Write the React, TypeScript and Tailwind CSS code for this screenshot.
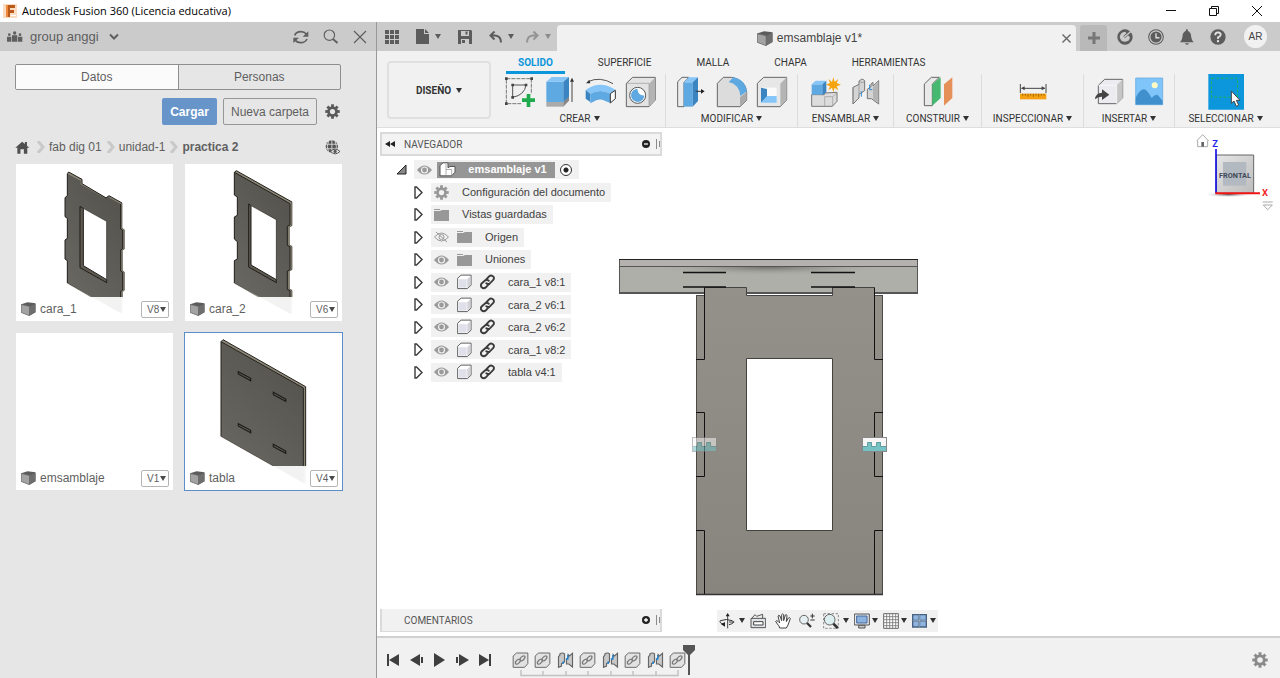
import type { ReactNode } from "react";

type GlyphProps = { box: string; className: string; children: ReactNode };

function Glyph({ box, className, children }: GlyphProps) {
  return (
    <svg viewBox={box} className={`shrink-0 ${className}`} fill="none" aria-hidden="true">
      {children}
    </svg>
  );
}

function Caret({ className = "text-[#333]" }: { className?: string }) {
  return (
    <Glyph box="0 0 6 5" className={`h-[5px] w-[6px] ${className}`}>
      <path d="M0 0h6L3 5z" fill="currentColor" />
    </Glyph>
  );
}

/* ---------- shared drawings ---------- */

function PartCube({ className = "h-[14px] w-[15px]" }: { className?: string }) {
  return (
    <Glyph box="62 440 46 44" className={className}>
      <path d="M62 447 82 441 107 444 107 472 88 483 62 473z" fill="#5c5c5c" />
      <path d="M62 448 88 454V483L62 473z" fill="#a3a3a3" />
      <path d="M88 454 107 446V472L88 483z" fill="#6e6e6e" />
      <path d="M62 448 88 454V483L62 473z" stroke="#6b6b6b" strokeWidth="2" />
    </Glyph>
  );
}

function Gear({ className, color }: { className: string; color: string }) {
  return (
    <Glyph box="0 0 16 16" className={className}>
      <circle cx="8" cy="8" r="4.2" stroke={color} strokeWidth="2.8" />
      {[0, 45, 90, 135, 180, 225, 270, 315].map((a) => (
        <rect key={a} x="6.5" y="0.3" width="3" height="3.4" fill={color} transform={`rotate(${a} 8 8)`} />
      ))}
    </Glyph>
  );
}

/* ---------- window title ---------- */

function TitleBar() {
  return (
    <header className="flex h-[22px] items-center bg-white pl-[3px] pr-[2px]">
      <Glyph box="0 0 14 14" className="h-[14px] w-[14px]">
        <rect width="14" height="14" fill="#fbdcc0" />
        <path d="M4 1h8v3H7v2h4v3H7v4H4z" fill="#b9591a" />
        <path d="M3 1h2v12H3z" fill="#f08a3c" />
        <path d="M8 11h5v1H8z" fill="#fff" />
      </Glyph>
      <h1 className="ml-[5px] flex-1 font-['Open_Sans','Noto_Sans',sans-serif] text-[11px] text-black">
        Autodesk Fusion 360 (Licencia educativa)
      </h1>
      <button aria-label="Minimizar" className="flex w-[43px] justify-center">
        <Glyph box="0 0 10 10" className="h-[10px] w-[10px]"><path d="M0 4.500h10" stroke="#111" /></Glyph>
      </button>
      <button aria-label="Restaurar" className="flex w-[43px] justify-center">
        <Glyph box="0 0 10 10" className="h-[10px] w-[10px]">
          <path d="M.5 2.500h7v7h-7zM2.500 2.500v-2h7v7h-2" stroke="#111" />
        </Glyph>
      </button>
      <button aria-label="Cerrar" className="flex w-[43px] justify-center">
        <Glyph box="0 0 10 10" className="h-[10px] w-[10px]"><path d="M0 0 10 10M10 0 0 10" stroke="#111" /></Glyph>
      </button>
    </header>
  );
}

/* ---------- data panel ---------- */

const wood = (
  <defs>
    <linearGradient id="wood" x1="0" y1="1" x2="0.6" y2="0">
      <stop offset="0" stopColor="#6b6a64" />
      <stop offset="1" stopColor="#56544f" />
    </linearGradient>
  </defs>
);

const caraUno = (
  <Glyph box="48 27 471 471" className="h-full w-full">
    {wood}
    <path fillRule="evenodd" d="M202 56 206 51 246 73V86L318 127 327 122 366 144V220L373 224V282L367 286V346L373 351V406L367 410V475L202 384V317L195 312V255L202 250V190L195 185V128L202 122zM240 154 320 199V383L240 338z" fill="#8b8575" />
    <path fillRule="evenodd" d="M202 56 242 77V88L315 130 325 126 362 147V222L368 226V281L362 285V348L368 352V405L362 409V475L202 384V317L195 312V255L202 250V190L195 185V128L202 122zM240 154 320 199V383L240 338z" fill="url(#wood)" />
    <path d="M202 56 206 51 246 73V86L318 129 327 122 366 144M362 147V222L368 226V281L362 285V348L368 352V405L362 409V430M202 384V317L195 312V255L202 250V190L195 185V128L202 122V56" stroke="#22211e" strokeWidth="3" />
    <path d="M240 154V338L320 383V374L250 332V160z" fill="#5e5a50" stroke="#1c1b18" strokeWidth="3" />
    <path d="M248 159 320 199V383" stroke="#33322e" strokeWidth="2" />
    <path d="M366 144V220L373 224V282L367 286V346L373 351V406L367 410V430M202 384 276 427" stroke="#45423a" strokeWidth="2" />
  </Glyph>
);

const caraDos = (
  <Glyph box="555 27 471 471" className="h-full w-full">
    {wood}
    <path fillRule="evenodd" d="M703 52 709 47 876 141V212L868 216V270L876 274V344L868 348V402L876 406V478L703 384V317L712 312V260L703 252V186L712 181V126L703 120zM746 147 829 194V383L746 336z" fill="#8b8575" />
    <path fillRule="evenodd" d="M703 52 870 146V210L862 214V271L870 275V344L862 348V403L870 407V476L703 384V317L712 312V260L703 252V186L712 181V126L703 120zM746 147 829 194V383L746 336z" fill="url(#wood)" />
    <path d="M703 52 709 47 876 141M703 52 870 146V210L862 214V271L870 275V344L862 348V403L870 407V430M703 384V317L712 312V260L703 252V186L712 181V126L703 120V52" stroke="#22211e" strokeWidth="3" />
    <path d="M746 147V336L829 383V374L753 330V152z" fill="#5e5a50" stroke="#1c1b18" strokeWidth="3" />
    <path d="M753 152 829 194V383" stroke="#33322e" strokeWidth="2" />
    <path d="M876 141V212L868 216V270L876 274V344L868 348V402L876 406V430M703 384 778 427" stroke="#45423a" strokeWidth="2" />
  </Glyph>
);

const tabla = (
  <Glyph box="555 534 471 471" className="h-full w-full">
    {wood}
    <path d="M663 560 669 554 917 695V986L663 844z" fill="#8b8575" />
    <path d="M663 560 910 699V984L663 844z" fill="url(#wood)" />
    <path d="M663 844V560L669 554 917 695V940M663 560 910 699V940" stroke="#24231f" strokeWidth="3" />
    <path d="M663 844 820 933" stroke="#45423a" strokeWidth="2" />
    {[[715, 650], [820, 712], [715, 806], [820, 868]].map(([x, y]) => (
      <path key={`${x}-${y}`} d={`M${x} ${y}l37 20v7l-37 -20z`} stroke="#1c1b18" strokeWidth="3.500" />
    ))}
  </Glyph>
);

const designs: { name: string; version: string; art?: ReactNode; selected?: boolean }[] = [
  { name: "cara_1", version: "V8", art: caraUno },
  { name: "cara_2", version: "V6", art: caraDos },
  { name: "emsamblaje", version: "V1" },
  { name: "tabla", version: "V4", art: tabla, selected: true },
];

function Crumb({ children }: { children: ReactNode }) {
  return (
    <li className="flex items-center">
      <Glyph box="0 0 8 12" className="ml-[5px] mr-[4px] h-[12px] w-[8px]">
        <path d="M1 0 6 6 1 12" stroke="#c9c9c9" strokeWidth="3" />
      </Glyph>
      {children}
    </li>
  );
}

function DataPanel() {
  return (
    <aside className="flex w-[377px] shrink-0 flex-col border-r border-[#999] bg-[#e6e6e6] text-[#5f5f5f]">
      <div className="flex h-[29px] items-center bg-[#cbcbcb] pl-[7px] pr-[9px]">
        <Glyph box="22 88 48 36" className="h-[12px] w-[16px]">
          <g fill="#5f5f5f">
            <circle cx="29" cy="99" r="4" /><circle cx="45" cy="94" r="5" /><circle cx="61" cy="99" r="4" />
            <path d="M22 105h13v15H22zM37 101h16v19H37zM55 105h13v15H55z" />
          </g>
        </Glyph>
        <button className="ml-[7px] flex items-center gap-[10px] text-[13px]">
          group anggi
          <Glyph box="0 0 10 8" className="h-[8px] w-[10px]"><path d="M1 1.500 5 5.500 9 1.500" stroke="#5f5f5f" strokeWidth="2" /></Glyph>
        </button>
        <div className="ml-auto flex items-center gap-[14px]">
          <button aria-label="Actualizar">
            <Glyph box="878 88 48 42" className="h-[14px] w-[16px]">
              <path d="M883 104Q888 93 902 93Q912 93 918 100M920 115Q915 126 901 126Q891 126 885 119" stroke="#5f5f5f" strokeWidth="5" />
              <path d="M924 92V108H907zM879 127V111H896z" fill="#5f5f5f" />
            </Glyph>
          </button>
          <button aria-label="Buscar">
            <Glyph box="968 86 48 46" className="h-[15px] w-[16px]">
              <circle cx="987" cy="105" r="16" stroke="#5f5f5f" strokeWidth="3.500" />
              <path d="M998 117 1012 129" stroke="#5f5f5f" strokeWidth="6" />
            </Glyph>
          </button>
          <button aria-label="Cerrar panel">
            <Glyph box="0 0 14 14" className="h-[14px] w-[14px]"><path d="M1 1 13 13M13 1 1 13" stroke="#5f5f5f" strokeWidth="1.200" /></Glyph>
          </button>
        </div>
      </div>

      <div className="flex flex-col pl-[15px] pr-[34px] pt-[13px] text-[12px]">
        <div role="tablist" className="mr-px flex h-[26px] overflow-hidden rounded-[2px] border border-[#8f8f8f]">
          <button role="tab" aria-selected="true" className="flex-1 border-r border-[#8f8f8f] bg-[#fbfbfb]">Datos</button>
          <button role="tab" aria-selected="false" className="flex-1">Personas</button>
        </div>
        <div className="mr-[2px] mt-2 flex items-center justify-end gap-[6px]">
          <button className="h-[27px] w-[55px] rounded-[2px] bg-[#6795ca] font-bold text-white">Cargar</button>
          <button className="h-[27px] w-[94px] rounded-[2px] border border-[#979797]">Nueva carpeta</button>
          <button aria-label="Ajustes" className="ml-[2px]"><Gear className="h-[15px] w-[15px]" color="#5a5a5a" /></button>
        </div>
        <nav aria-label="Ruta" className="mt-[13px] flex h-[18px] items-center">
          <a href="#inicio" aria-label="Inicio" className="mr-[2px]">
            <Glyph box="47 424 42 38" className="h-[13px] w-[15px]">
              <path d="M47 444 67 426 75 433V427H81V438L88 444H82V461H72V448H62V461H53V444z" fill="#4f4f4f" />
            </Glyph>
          </a>
          <ol className="flex items-center">
            <Crumb><a href="#fab">fab dig 01</a></Crumb>
            <Crumb><a href="#unidad">unidad-1</a></Crumb>
            <Crumb><span className="font-bold">practica 2</span></Crumb>
          </ol>
          <button aria-label="Abrir en la web" className="ml-auto mr-[2px]">
            <Glyph box="972 420 46 46" className="h-[15px] w-[15px]">
              <circle cx="993" cy="440" r="19" fill="#565656" />
              <path d="M993 420V460M974 433H1012M974 447H1012M983 423Q975 440 983 458M1003 423Q1011 440 1003 458" stroke="#e6e6e6" strokeWidth="2.500" />
              <path d="M989 455Q1003 441 1018 455Q1003 470 989 455" fill="#e6e6e6" stroke="#565656" strokeWidth="3" />
              <circle cx="1003" cy="455" r="5" fill="#565656" />
            </Glyph>
          </button>
        </nav>
        <ul className="mt-[8px] grid grid-cols-2 gap-[12px] pl-[1px]">
          {designs.map((d) => (
            <li
              key={d.name}
              className={`relative h-[157px] bg-white ${d.selected ? "ring-1 ring-[#5b8fcb]" : ""}`}
            >
              {d.art}
              <div className="absolute inset-x-0 bottom-0 flex h-[24px] items-center bg-white/92 pl-[5px] pr-[4px]">
                <PartCube />
                <span className="ml-[4px] flex-1">{d.name}</span>
                <span className="relative flex items-center">
                  <select
                    aria-label={`Versión de ${d.name}`}
                    className="h-[17px] w-[28px] appearance-none rounded-[2px] border border-[#b4b4b4] bg-white pl-[5px] text-[10px]"
                    defaultValue={d.version}
                  >
                    <option>{d.version}</option>
                  </select>
                  <span className="pointer-events-none absolute right-[3px]"><Caret className="text-[#4a4a4a]" /></span>
                </span>
              </div>
            </li>
          ))}
        </ul>
      </div>
    </aside>
  );
}

/* ---------- document bar ---------- */

function DocumentBar() {
  return (
    <div className="flex h-[29px] bg-[#cbcbcb] pt-[3px]">
      <div className="flex w-[180px] shrink-0 items-center pl-[8px] pb-[3px]">
        <button aria-label="Panel de datos">
          <Glyph box="0 0 14 14" className="h-[14px] w-[14px]">
            {[0, 5, 10].map((y) => [0, 5, 10].map((x) => (
              <rect key={`${x}${y}`} x={x} y={y} width="4" height="4" fill="#5c5c5c" />
            )))}
          </Glyph>
        </button>
        <button aria-label="Archivo" className="ml-[17px] flex items-center gap-[6px]">
          <Glyph box="0 0 13 15" className="h-[15px] w-[13px]">
            <path d="M0 0h8v5h5v10H0z" fill="#5c5c5c" /><path d="M9 0v4h4z" fill="#5c5c5c" />
          </Glyph>
          <Caret className="text-[#5c5c5c]" />
        </button>
        <button aria-label="Guardar" className="ml-[17px]">
          <Glyph box="0 0 14 14" className="h-[14px] w-[14px]">
            <path fillRule="evenodd" d="M0 0H13L14 1V14H0zM3 1V6H11V1zM3 9V14H11V9z" fill="#5c5c5c" />
            <path d="M7.500 1.500h2v3h-2zM4 10h3v3H4z" fill="#5c5c5c" />
          </Glyph>
        </button>
        <button aria-label="Deshacer" className="ml-[17px] flex items-center gap-[6px]">
          <Glyph box="0 0 13 12" className="h-[12px] w-[13px]">
            <path d="M5.500 .5 1.500 4.500 5.500 8.500M2 4.500H6Q12 5 12 11.500" stroke="#5c5c5c" strokeWidth="2" />
          </Glyph>
          <Caret className="text-[#5c5c5c]" />
        </button>
        <button aria-label="Rehacer" className="ml-[12px] flex items-center gap-[6px]">
          <Glyph box="0 0 13 12" className="h-[12px] w-[13px]">
            <path d="M7.500 .5 11.500 4.500 7.500 8.500M11 4.500H7Q1 5 1 11.500" stroke="#949494" strokeWidth="2" />
          </Glyph>
          <Caret className="text-[#8c8c8c]" />
        </button>
      </div>
      <div className="flex flex-1 items-center rounded-t-[4px] bg-[#f1f1f1] pr-[5px] text-[12px] text-[#444]">
        <div className="flex flex-1 items-center justify-center gap-[4px]">
          <PartCube className="h-[15px] w-[16px]" />
          <span>emsamblaje v1*</span>
        </div>
        <button aria-label="Cerrar documento">
          <Glyph box="0 0 9 9" className="h-[9px] w-[9px]"><path d="M.5 .5 8.500 8.500M8.500 .5 .5 8.500" stroke="#666" strokeWidth="1.400" /></Glyph>
        </button>
      </div>
      <div className="flex shrink-0 pl-[4px] pr-[13px]">
        <button aria-label="Nuevo documento" className="flex w-[27px] items-center justify-center rounded-t-[3px] bg-[#b9b9b9]">
          <Glyph box="0 0 12 12" className="h-[12px] w-[12px]"><path d="M6 0V12M0 6H12" stroke="#777" strokeWidth="3" /></Glyph>
        </button>
        <div className="flex items-center gap-[15px] pb-[3px] pl-[10px]">
          <button aria-label="Extensiones">
            <Glyph box="413 86 46 46" className="h-[16px] w-[16px]">
              <path fillRule="evenodd" d="M436 87a22 22 0 1 1-.1 0M437 94Q421 96 421 110Q424 123 436 123Q450 122 450 110L445 104 436 112 431 107 440 98z" fill="#5c5c5c" />
              <path d="M434 109 453 93" stroke="#cbcbcb" strokeWidth="4" />
            </Glyph>
          </button>
          <button aria-label="Estado de trabajos">
            <Glyph box="506 86 46 46" className="h-[16px] w-[16px]">
              <circle cx="529" cy="109" r="21" stroke="#5c5c5c" strokeWidth="3" />
              <circle cx="529" cy="109" r="16" fill="#5c5c5c" />
              <path d="M529 98V111H539" stroke="#ddd" strokeWidth="4" />
            </Glyph>
          </button>
          <button aria-label="Notificaciones">
            <Glyph box="599 86 46 46" className="h-[16px] w-[16px]">
              <path d="M619 87h5v4Q634 95 634 108Q635 117 641 124H602Q608 117 609 108Q609 95 619 91zM616 127h12q-6 9-12 0" fill="#5c5c5c" />
            </Glyph>
          </button>
          <button aria-label="Ayuda">
            <Glyph box="691 86 46 46" className="h-[16px] w-[16px]">
              <circle cx="714" cy="109" r="22" fill="#5c5c5c" />
              <path d="M706 104Q706 96 714 96Q722 97 722 103Q721 107 714 110V115" stroke="#e4e4e4" strokeWidth="5" />
              <path d="M711 118h6v6h-6z" fill="#e4e4e4" />
            </Glyph>
          </button>
          <button className="ml-[3px] h-[23px] w-[23px] rounded-full bg-[#f1f1f1] text-[10px] text-[#444]">AR</button>
        </div>
      </div>
    </div>
  );
}

/* ---------- ribbon ---------- */

const O = "#555";

const icons = {
  sketch: (
    <Glyph box="384 228 96 96" className="h-8 w-8">
      <path d="M391 236H466V311H391z" stroke="#777" strokeWidth="3" strokeDasharray="12 3" />
      <path d="M410 255H450Q446 285 410 292z" stroke={O} strokeWidth="3" />
      <g fill="#444">
        <path d="M387 232h8v8h-8zM463 232h8v8h-8zM387 307h8v8h-8zM406 251h8v8h-8zM446 251h8v8h-8zM406 288h8v8h-8z" />
      </g>
      <path d="M436 281H482V325H436z" fill="#f1f1f1" />
      <path d="M452 282h11v13h14v11h-14v15h-11v-15h-14v-11h14z" fill="#1faa4e" />
    </Glyph>
  ),
  extrude: (
    <Glyph box="504 228 96 96" className="h-8 w-8">
      <path d="M511 306H562V320H511z" fill="#aaa" /><path d="M562 306 579 288V302L562 320z" fill="#888" />
      <path d="M511 245H562V306H511z" fill="#5fa9e2" />
      <path d="M511 245 527 231H579L562 245z" fill="#86c5f7" />
      <path d="M562 245 579 231V290L562 306z" fill="#3b84c2" />
      <path d="M588 306V240" stroke="#444" strokeWidth="3" /><path d="M588 233 594 245H582z" fill="#333" />
    </Glyph>
  ),
  revolve: (
    <Glyph box="624 228 96 96" className="h-8 w-8">
      <path d="M636 245Q672 228 711 251" stroke={O} strokeWidth="3" /><path d="M630 250 640 239 643 250z" fill="#333" />
      <path d="M629 270Q672 238 719 270L703 281Q674 265 643 281z" fill="#86c5f7" />
      <path d="M629 270 643 281V306L629 296z" fill="#3b84c2" />
      <path d="M643 281Q674 265 703 281V309L686 302Q673 296 661 301L643 310z" fill="#5fa9e2" />
      <path d="M703 281 718 271V296L703 309z" fill="#fff" stroke="#333" strokeWidth="3" />
    </Glyph>
  ),
  hole: (
    <Glyph box="744 228 96 96" className="h-8 w-8">
      <path d="M751 250 770 232H838V300L819 320H751z" fill="#e3e3e3" stroke="#666" strokeWidth="3" />
      <path d="M819 251 838 232V300L819 320z" fill="#b4b4b4" /><path d="M751 250H819V320" stroke="#999" strokeWidth="2" />
      <circle cx="785" cy="286" r="24" fill="#fff" stroke="#555" strokeWidth="3" />
      <path d="M784 266Q787 288 805 286Q803 306 785 306Q766 304 765 286Q766 268 784 266" fill="#5fa9e2" />
    </Glyph>
  ),
  pressPull: (
    <Glyph box="18 228 96 96" className="h-8 w-8">
      <path d="M23 245 36 232H56L42 247V320H23z" fill="#ececec" stroke="#666" strokeWidth="3" />
      <path d="M41 247H68V320H41z" fill="#5fa9e2" /><path d="M41 247 56 232H84L68 247z" fill="#86c5f7" />
      <path d="M68 247 84 232V303L68 320z" fill="#3b84c2" />
      <path d="M77 274H96" stroke="#333" strokeWidth="3" /><path d="M93 267 104 274 93 281z" fill="#222" />
    </Glyph>
  ),
  fillet: (
    <Glyph box="138 228 96 96" className="h-8 w-8">
      <path d="M142 250 160 232H185Q228 240 230 277V301L210 320H142z" fill="#dcdcdc" stroke="#666" strokeWidth="3" />
      <path d="M176 246 191 231Q226 240 231 274L211 288Q209 254 176 246" fill="#5fa9e2" />
      <path d="M210 292 230 276V301L210 320z" fill="#aaa" />
    </Glyph>
  ),
  shell: (
    <Glyph box="258 228 96 96" className="h-8 w-8">
      <path d="M262 250 281 232H350V300L331 320H262z" fill="#e7e7e7" stroke="#666" strokeWidth="3" />
      <path d="M331 251 350 232V300L331 320z" fill="#b4b4b4" />
      <path d="M273 263H320V308H273z" fill="#fafafa" /><path d="M273 263 291 267V290L273 308z" fill="#3b84c2" />
      <path d="M291 288H320V308H273z" fill="#86c5f7" />
    </Glyph>
  ),
  newComponent: (
    <Glyph box="417 228 96 96" className="h-8 w-8">
      <path d="M422 284H460V279L498 277V304L484 319H422z" fill="#dcdcdc" stroke="#777" strokeWidth="3" />
      <path d="M461 290V319M461 290H485V319M485 290 499 278" stroke="#999" strokeWidth="2" />
      <path d="M422 253H454V284H422z" fill="#5fa9e2" /><path d="M422 253 434 242H466L454 253z" fill="#86c5f7" />
      <path d="M454 253 466 242V277L454 286z" fill="#3b84c2" />
      <path d="M487 232 491 246 502 237 497 249 510 254 497 259 502 271 491 263 487 277 483 263 472 271 477 259 465 254 477 249 472 237 483 246z" fill="#f5a30d" />
    </Glyph>
  ),
  joint: (
    <Glyph box="540 228 96 96" className="h-8 w-8">
      <path d="M549 262 567 253V244Q575 232 584 242V272L567 283V294L549 312z" fill="#d4d4d4" stroke="#777" strokeWidth="3" />
      <path d="M568 245Q576 250 584 245M567 253V283M549 262V312" stroke="#888" strokeWidth="2" />
      <path d="M574 274V290" stroke="#2588d8" strokeWidth="3" />
      <path d="M592 268 603 260V252L609 247V258L626 242V312L604 296H592z" fill="#d4d4d4" stroke="#777" strokeWidth="3" />
      <path d="M609 262 625 246V309L609 298z" fill="#b4b4b4" /><path d="M599 254V269H607" stroke="#2588d8" strokeWidth="3" />
    </Glyph>
  ),
  plane: (
    <Glyph box="756 228 96 96" className="h-8 w-8">
      <path d="M763 252 784 232H808L787 252V317H763z" fill="#e9e9e9" stroke="#666" strokeWidth="3" />
      <path d="M787 253 812 232V294L787 317z" fill="#46b86f" />
      <path d="M822 253 847 232V294L822 317z" fill="#e59058" />
    </Glyph>
  ),
  measure: (
    <Glyph box="110 228 96 96" className="h-8 w-8">
      <path d="M120 252V279M197 252V279M124 265H193" stroke="#444" strokeWidth="3" />
      <path d="M122 265 133 259V271zM195 265 184 259V271z" fill="#444" />
      <path d="M119 281H198V298H119z" fill="#f4a010" />
      <path d="M127 281v6M135 281v6M143 281v9M151 281v6M159 281v9M167 281v6M175 281v9M183 281v6M191 281v6" stroke="#774c00" strokeWidth="2" />
    </Glyph>
  ),
  insertDerive: (
    <Glyph box="342 228 96 96" className="h-8 w-8">
      <path d="M358 256 377 238H431V293L413 311H358z" fill="#ececf0" stroke="#666" strokeWidth="3" />
      <path d="M413 256 431 238V293L413 311z" fill="#c6c6c6" /><path d="M358 256H413V311" stroke="#fff" strokeWidth="2" />
      <path d="M348 298Q350 278 369 278V268L391 284 369 300V290Q357 289 348 298" fill="#444" />
    </Glyph>
  ),
  canvas: (
    <Glyph box="460 228 96 96" className="h-8 w-8">
      <path d="M468 234H549V314H468z" fill="#80c5fa" />
      <path d="M468 293Q482 267 493 268Q502 268 516 294Q528 281 535 286L549 303V314H468z" fill="#3f90cd" />
      <path d="M468 234H549V314H468z" stroke="#5aa3dc" strokeWidth="2" />
      <circle cx="525" cy="256" r="9" fill="#fffbc2" />
    </Glyph>
  ),
  select: (
    <Glyph box="682 222 108 108" className="h-9 w-9">
      <path d="M683 222H790V329H683z" fill="#0c96dc" />
      <path d="M692.500 234.500H770.500V291.500H692.500z" stroke="#1fb068" strokeWidth="3" strokeDasharray="9 5" />
      <path d="M752 273V310L760 303 767 319 774 315 767 301H778z" fill="#fff" stroke="#444" strokeWidth="3" />
    </Glyph>
  ),
};

const groups: { label: string; width: string; tools: [string, ReactNode][] }[] = [
  { label: "CREAR", width: "w-[172px]", tools: [["Crear boceto", icons.sketch], ["Extruir", icons.extrude], ["Revolución", icons.revolve], ["Agujero", icons.hole]] },
  { label: "MODIFICAR", width: "w-[132px]", tools: [["Pulsar/tirar", icons.pressPull], ["Empalme", icons.fillet], ["Vaciado", icons.shell]] },
  { label: "ENSAMBLAR", width: "w-[96px]", tools: [["Nuevo componente", icons.newComponent], ["Unión", icons.joint]] },
  { label: "CONSTRUIR", width: "w-[88px]", tools: [["Plano desfasado", icons.plane]] },
  { label: "INSPECCIONAR", width: "w-[102px]", tools: [["Medir", icons.measure]] },
  { label: "INSERTAR", width: "w-[91px]", tools: [["Insertar derivado", icons.insertDerive], ["Lienzo", icons.canvas]] },
  { label: "SELECCIONAR", width: "w-[102px]", tools: [["Seleccionar", icons.select]] },
];

function Ribbon() {
  return (
    <div className="flex h-[77px] border-b border-[#dedede] bg-[#f1f1f1] font-['Roboto',sans-serif] text-[10px] text-[#333]">
      <button className="mb-[8px] ml-[10px] mt-[10px] flex w-[104px] shrink-0 items-center justify-center gap-[5px] rounded-[4px] border-2 border-[#e0e0e0] font-bold">
        DISEÑO <Caret />
      </button>
      <div className="flex flex-col">
        <div role="tablist" className="flex h-[23px] gap-[21px] pl-[15px]">
          {["SOLIDO", "SUPERFICIE", "MALLA", "CHAPA", "HERRAMIENTAS"].map((t, i) => (
            <button
              key={t}
              role="tab"
              aria-selected={i === 0}
              className={`border-b-[3px] px-3 pt-[2px] ${i === 0 ? "border-[#0c96dc] font-bold text-[#0c96dc]" : "border-transparent"}`}
            >
              {t}
            </button>
          ))}
        </div>
        <div className="flex pl-[3px]">
          {groups.map((g) => (
            <section
              key={g.label}
              aria-label={g.label}
              className={`flex shrink-0 flex-col items-center border-r border-[#dcdcdc] last:border-transparent ${g.width}`}
            >
              <div className="flex h-9 items-center">
                {g.tools.map(([name, art]) => (
                  <button key={name} aria-label={name} className="flex w-10 justify-center">{art}</button>
                ))}
              </div>
              <button className="flex h-[17px] items-center gap-[3px] whitespace-nowrap">
                {g.label} <Caret />
              </button>
            </section>
          ))}
        </div>
      </div>
    </div>
  );
}

/* ---------- browser tree ---------- */

function Eye() {
  return (
    <Glyph box="0 0 15 10" className="h-[10px] w-[15px]">
      <path d="M0 5Q7.500 -4 15 5Q7.500 14 0 5" fill="#9a9a9a" />
      <circle cx="7.500" cy="5" r="3" stroke="#f1f1f1" strokeWidth="1.200" />
    </Glyph>
  );
}

function EyeOff() {
  return (
    <Glyph box="0 0 15 12" className="h-[12px] w-[15px]">
      <path d="M.5 6Q7.500 -2 14.500 6Q7.500 14 .5 6M2 1 13 11" stroke="#9a9a9a" />
      <circle cx="7.500" cy="6" r="2.500" stroke="#9a9a9a" />
    </Glyph>
  );
}

function Folder() {
  return (
    <Glyph box="0 0 15 12" className="h-[12px] w-[15px]">
      <path d="M0 0H6V1H0zM0 2H6L8 1H15V12H0z" fill="#989898" />
    </Glyph>
  );
}

function Body() {
  return (
    <Glyph box="243 58 48 48" className="h-[16px] w-[15px]">
      <path d="M245 70 256 60H288V92L276 103H245z" fill="#fff" stroke="#5b5b5b" strokeWidth="3" strokeLinejoin="round" />
      <path d="M249 73H274V100H249z" fill="#dfe0ea" /><path d="M276 73 286 63V91L276 101z" fill="#d2d2d8" />
    </Glyph>
  );
}

function Link() {
  return (
    <Glyph box="313 58 48 48" className="h-[16px] w-[15px]">
      <g stroke="#3a3a3a" strokeWidth="6" strokeLinecap="round">
        <path d="M333 74 342 64Q349 58 356 65Q360 71 354 77L344 87Q338 90 333 86" />
        <path d="M341 89 332 99Q325 105 318 99Q313 92 319 86L329 77Q336 73 341 78" />
      </g>
    </Glyph>
  );
}

function Expander() {
  return (
    <Glyph box="0 0 9 13" className="h-[13px] w-[9px]">
      <path d="M1 1H2.500L8 6.500 2.500 12H1z" fill="#fff" stroke="#3a3a3a" strokeWidth="1.400" />
    </Glyph>
  );
}

const gearIcon = <Gear className="h-[15px] w-[15px]" color="#989898" />;

const rows: { label: string; marks: ReactNode[] }[] = [
  { label: "Configuración del documento", marks: [gearIcon] },
  { label: "Vistas guardadas", marks: [<Folder />] },
  { label: "Origen", marks: [<EyeOff />, <Folder />] },
  { label: "Uniones", marks: [<Eye />, <Folder />] },
  { label: "cara_1 v8:1", marks: [<Eye />, <Body />, <Link />] },
  { label: "cara_2 v6:1", marks: [<Eye />, <Body />, <Link />] },
  { label: "cara_2 v6:2", marks: [<Eye />, <Body />, <Link />] },
  { label: "cara_1 v8:2", marks: [<Eye />, <Body />, <Link />] },
  { label: "tabla v4:1", marks: [<Eye />, <Body />, <Link />] },
];

function PanelHandle() {
  return (
    <Glyph box="0 0 4 10" className="h-[10px] w-[4px]"><path d="M.5 0V10M3.500 2V8" stroke="#8a8a8a" /></Glyph>
  );
}

function Browser() {
  return (
    <div className="relative w-[285px] pl-[3px] pt-[4px] text-[11px] text-[#3f3f3f]">
      <div className="flex h-[24px] items-center border-2 border-[#dadada] bg-[#f3f3f3] pl-[3px] font-['Roboto',sans-serif] text-[10px] text-[#555]">
        <Glyph box="0 0 10 6" className="h-[6px] w-[10px]"><path d="M5 0V6L0 3zM10 0V6L5 3z" fill="#222" /></Glyph>
        <h2 className="ml-[9px] flex-1">NAVEGADOR</h2>
        <button aria-label="Contraer" className="mr-[6px]">
          <Glyph box="0 0 8 8" className="h-[8px] w-[8px]"><circle cx="4" cy="4" r="4" fill="#222" /><path d="M2 4H6" stroke="#fff" strokeWidth="1.300" /></Glyph>
        </button>
        <PanelHandle />
      </div>
      <ul className="mt-[4px] flex h-[222px] flex-col items-start justify-between">
        <li className="flex h-[19px] items-center pl-[16px]">
          <Glyph box="0 0 11 11" className="h-[11px] w-[11px]"><path d="M10 1V10H1z" fill="#888" stroke="#222" /></Glyph>
          <div className="ml-[7px] flex h-[19px] items-center bg-[#f1f1f1] pl-[3px] pr-[7px]">
            <Eye />
            <div className="ml-[5px] flex h-[16px] w-[118px] items-center bg-[#969696] pl-[2px] font-bold text-white">
              <Glyph box="190 103 51 44" className="h-[15px] w-[17px]">
                <path d="M193 113 202 105H217V120L223 116H238V133L228 144H193z" fill="#fff" stroke="#555" strokeWidth="3" />
                <path d="M211 108V144M211 125H228V143" stroke="#888" strokeWidth="2" />
              </Glyph>
              <span className="flex-1 whitespace-nowrap pl-[4px] text-center">emsamblaje v1</span>
            </div>
            <input
              type="radio"
              aria-label="Activar emsamblaje v1"
              defaultChecked
              className="ml-[5px] h-[12px] w-[12px] appearance-none rounded-full border border-[#333] bg-[radial-gradient(circle,#222_2px,white_3px)]"
            />
          </div>
        </li>
        {rows.map((r) => (
          <li key={r.label} className="flex h-[19px] items-center pl-[34px]">
            <Expander />
            <div className="ml-[8px] flex h-[19px] items-center bg-[#f1f1f1] pl-[3px] pr-[6px]">
              <div className="flex items-center gap-[8px]">
                {r.marks.map((m, i) => <span key={i}>{m}</span>)}
              </div>
              <span className="ml-[13px] whitespace-nowrap">{r.label}</span>
            </div>
          </li>
        ))}
      </ul>
    </div>
  );
}

/* ---------- model and view cube ---------- */

function JointMark({ x, faded }: { x: number; faded?: boolean }) {
  return (
    <g transform={`translate(${x} 437)`} opacity={faded ? 0.55 : 1}>
      <rect x="0.500" y="0.500" width="24" height="14" fill="#f6f6f6" stroke="#888" />
      <path d="M1 10H6V5H10V10H15V5H19V10H24V14H1z" fill="#74c2c4" />
      <path d="M1 9.500H5.500V5.500H9.500V9.500H14.500V5.500H18.500V9.500H24" stroke="#5f9c9d" />
    </g>
  );
}

function Model() {
  return (
    <svg viewBox="619 259 300 337" className="absolute left-[242px] top-[131px] h-[337px] w-[300px]" fill="none" role="img" aria-label="Ensamblaje">
      <defs>
        <linearGradient id="front" x1="0" y1="0" x2="0" y2="1">
          <stop offset="0" stopColor="#94918a" /><stop offset="1" stopColor="#88857e" />
        </linearGradient>
        <radialGradient id="shade" gradientUnits="userSpaceOnUse" cx="0" cy="0" r="1" gradientTransform="translate(768 267) scale(120 9)">
          <stop offset="0" stopColor="#64625e" stopOpacity="0.8" /><stop offset="1" stopColor="#adafa7" stopOpacity="0" />
        </radialGradient>
      </defs>
      <path d="M619 259H918V293H619z" fill="#adafa8" />
      <path d="M619 259H918V266H619z" fill="#b5b1ae" />
      <path d="M640 267H900V277H640z" fill="url(#shade)" />
      <path d="M619.500 259V293M917.500 259V293M619 266.500H918" stroke="#555" />
      <path d="M619 259.500H918" stroke="#222" />
      <path d="M619 293H918" stroke="#555" strokeWidth="2" />
      <path d="M704 288H747V296H832V288H875V295H883V595H696V295H704z" fill="url(#front)" />
      <path d="M704 287.500H746.500V295.500H832.500V287.500H875" stroke="#444" />
      <path d="M747 293H832" stroke="#555" />
      <path d="M747 294.500H832M697 294.500H704M875 294.500H882" stroke="#fff" />
      <path d="M683 272.500H726M811 272.500H855M683 287H726M811 287H855" stroke="#111" strokeWidth="1.500" />
      <path d="M746.500 358.500H832.500V530.500H746.500z" fill="#fff" stroke="#44423e" />
      <path d="M696.500 295V594M882.500 295V594M697 295.500H704M875 295.500H882" stroke="#4c4a46" />
      <path d="M696 594.500H883" stroke="#333" strokeWidth="1.500" />
      <path d="M704.500 288V359.500H696M704.500 594V530.500H696M696 412.500H704.500V476.500H696" stroke="#111" />
      <path d="M874.500 288V359.500H883M874.500 594V530.500H883M883 412.500H874.500V476.500H883" stroke="#111" />
      <JointMark x={692} faded />
      <JointMark x={862} />
    </svg>
  );
}

function ViewCube() {
  return (
    <svg viewBox="645 399 240 234" className="absolute right-[5px] top-[5px] h-[78px] w-[80px]" fill="none" role="img" aria-label="Vista frontal">
      <defs>
        <linearGradient id="cube" x1="0" y1="0" x2="1" y2="1"><stop offset="0" stopColor="#e6e6e6" /><stop offset="1" stopColor="#bcbcbc" /></linearGradient>
        <radialGradient id="cubeShadow"><stop offset="0" stopColor="#555" /><stop offset="1" stopColor="#fff" stopOpacity="0" /></radialGradient>
      </defs>
      <path d="M650 423 668 404 686 423M653 422V440H683V422" stroke="#999" strokeWidth="2.500" />
      <path d="M664 426h8v14h-8z" fill="#666" />
      <ellipse cx="745" cy="584" rx="75" ry="8" fill="url(#cubeShadow)" />
      <path d="M709 465H821V580H709z" fill="url(#cube)" stroke="#666" strokeWidth="3" />
      <path d="M729 486H799V557H729z" fill="#b3b9c1" />
      <text x="765" y="533" textAnchor="middle" fontSize="22" fontWeight="700" fill="#3f4a57" className="font-['Roboto',sans-serif]">FRONTAL</text>
      <path d="M708 447V580" stroke="#1414e6" strokeWidth="5" />
      <path d="M706 580H840" stroke="#f01414" strokeWidth="6" />
      <text x="697" y="440" fontSize="28" fontWeight="700" fill="#1f1ff0" className="font-['Roboto',sans-serif]">Z</text>
      <text x="846" y="589" fontSize="28" fontWeight="700" fill="#f01f1f" className="font-['Roboto',sans-serif]">X</text>
      <path d="M848 606H878M850 615H877L863 629z" stroke="#999" strokeWidth="2.500" />
    </svg>
  );
}

/* ---------- bottom bars ---------- */

function ViewToolbar() {
  return (
    <div className="flex h-[22px] items-center bg-[#f1f1f1] pl-[2px] pr-[2px]">
      <button aria-label="Órbita" className="flex w-[31px] items-center gap-[4px]">
        <Glyph box="58 38 48 48" className="h-[16px] w-[16px]">
          <path d="M84 42V84M88 65H104" stroke="#444" strokeWidth="3" />
          <path d="M74 72Q57 68 62 61Q80 54 98 61Q108 68 88 73" stroke="#333" strokeWidth="3" />
          <path d="M84 38 78 48H90zM64 72 76 65V79z" fill="#222" />
        </Glyph>
        <Caret />
      </button>
      <button aria-label="Mirar a" className="w-[25px]">
        <Glyph box="149 38 48 48" className="h-[16px] w-[16px]">
          <path d="M152 54H196V82H152z" fill="#dfe3e8" stroke="#555" strokeWidth="3" />
          <path d="M160 64H188V74H160z" fill="#fff" stroke="#444" strokeWidth="3" />
          <path d="M155 53 164 43 169 48 187 42V53" stroke="#555" strokeWidth="3" />
        </Glyph>
      </button>
      <button aria-label="Encuadrar" className="w-[24px]">
        <Glyph box="224 38 48 48" className="h-[16px] w-[16px]">
          <path d="M238 83Q237 76 231 71L226 63Q228 59 233 63L238 68 233 47Q235 43 239 47L244 61V43Q247 38 250 43V61L255 44Q259 41 260 46L258 64 264 53Q269 50 270 55L263 74 258 83z" fill="#fff" stroke="#444" strokeWidth="3" />
        </Glyph>
      </button>
      <button aria-label="Zoom" className="w-[24px]">
        <Glyph box="296 38 48 48" className="h-[16px] w-[16px]">
          <circle cx="311" cy="58" r="13" fill="#e6f0f3" stroke="#666" strokeWidth="3" />
          <path d="M320 68 332 80" stroke="#333" strokeWidth="7" /><path d="M330 47H343M336 40V54M330 59H343" stroke="#333" strokeWidth="3" />
        </Glyph>
      </button>
      <button aria-label="Ajustar" className="flex w-[31px] items-center gap-[4px]">
        <Glyph box="369 38 48 48" className="h-[16px] w-[16px]">
          <path d="M371 40H415V84H371z" stroke="#888" strokeWidth="3" strokeDasharray="7 5" />
          <circle cx="389" cy="58" r="16" fill="#dceef0" stroke="#666" strokeWidth="3" /><path d="M400 70 413 83" stroke="#333" strokeWidth="8" />
        </Glyph>
        <Caret />
      </button>
      <button aria-label="Visualización" className="flex w-[29px] items-center gap-[2px]">
        <Glyph box="463 38 48 48" className="h-[16px] w-[16px]">
          <path d="M464 41H509V74H464z" fill="#e5e7ea" stroke="#555" strokeWidth="3" /><path d="M471 47H502V68H471z" fill="#8db3e0" stroke="#44679a" strokeWidth="3" />
          <path d="M477 75H496V83H477z" fill="#ccc" stroke="#555" strokeWidth="3" />
        </Glyph>
        <Caret />
      </button>
      <button aria-label="Rejilla" className="flex w-[29px] items-center gap-[2px]">
        <Glyph box="550 38 48 48" className="h-[16px] w-[16px]">
          <path d="M552 40H596V84H552z" fill="#fff" stroke="#666" strokeWidth="3" />
          <path d="M561 40V84M570 40V84M579 40V84M588 40V84M552 49H596M552 58H596M552 67H596M552 76H596" stroke="#777" strokeWidth="2.500" />
        </Glyph>
        <Caret />
      </button>
      <button aria-label="Vistas" className="flex items-center gap-[2px]">
        <Glyph box="637 38 48 48" className="h-[16px] w-[16px]">
          <path d="M639 43H680V80H639z" fill="#8fb4e0" stroke="#46607f" strokeWidth="4" /><path d="M659 43V80M639 61H680" stroke="#46607f" strokeWidth="5" />
          <path d="M659 43V80M639 61H680" stroke="#d7e4f2" strokeWidth="1.500" />
        </Glyph>
        <Caret />
      </button>
    </div>
  );
}

function LinkedFeature() {
  return (
    <Glyph box="410 138 50 48" className="h-[16px] w-[17px]">
      <path d="M413 150 423 141H457V173L447 184H413z" fill="#e2e2e2" stroke="#6a6a6a" strokeWidth="3" />
      <g stroke="#777" strokeWidth="3.500">
        <ellipse cx="427" cy="167" rx="9" ry="5" transform="rotate(-45 427 167)" /><ellipse cx="441" cy="157" rx="9" ry="5" transform="rotate(-45 441 157)" />
      </g>
    </Glyph>
  );
}

function JointFeature() {
  return (
    <Glyph box="545 138 50 48" className="h-[16px] w-[17px]">
      <path d="M549 152 553 148V144Q561 138 567 144V168L558 173V180L549 184z" fill="#c9c9c9" stroke="#666" strokeWidth="3.500" />
      <path d="M573 160 578 154V146L582 150 591 142V183L580 174H573z" fill="#c9c9c9" stroke="#666" strokeWidth="3.500" />
      <path d="M577 147V159H571M563 166V174" stroke="#1e84d6" strokeWidth="4" />
    </Glyph>
  );
}

const features = ["link", "link", "joint", "link", "joint", "link", "joint", "link"];

const playback: [string, string][] = [
  ["Ir al inicio", "M0 0H2V12H0zM12 0V12L2 6z"],
  ["Paso atrás", "M10 0V12L0 6zM11 3H13V9H11z"],
  ["Reproducir", "M1 -1 12 6 1 13z"],
  ["Paso adelante", "M3 0V12L13 6zM0 3H2V9H0z"],
  ["Ir al final", "M0 0V12L10 6zM10 0H12V12H10z"],
];

function Timeline() {
  return (
    <footer className="flex h-[42px] items-center border-t-2 border-[#d0d0d0] bg-[#f1f1f1] pl-[5px] pr-[12px] pt-[4px]">
      <div className="flex">
        {playback.map(([name, d]) => (
          <button key={name} aria-label={name} className="flex w-[23px] justify-center">
            <Glyph box="0 -1 13 14" className="h-[14px] w-[13px]"><path d={d} fill="#3f3f3f" /></Glyph>
          </button>
        ))}
      </div>
      <div className="ml-[12px] w-[180px] pt-[8px]">
        <div className="grid grid-cols-8">
          {features.map((f, i) => (
            <button key={i} aria-label={`Operación ${i + 1}`} className="flex justify-center">
              {f === "link" ? <LinkedFeature /> : <JointFeature />}
            </button>
          ))}
        </div>
        <Glyph box="0 0 180 8" className="mt-[1px] h-[8px] w-[180px]">
          <path d="M12 1V6.500H169V1M34 2V6M57 2V6M79 2V6M102 2V6M124 2V6M147 2V6" stroke="#c2c2c2" strokeWidth="1.500" />
        </Glyph>
      </div>
      <Glyph box="0 0 12 30" className="-ml-[6px] h-[30px] w-[12px]">
        <path d="M0 0H12V5L7 10H5L0 5z" fill="#555" /><path d="M6 8V30" stroke="#555" strokeWidth="2" />
      </Glyph>
      <button aria-label="Ajustes de la línea de tiempo" className="ml-auto"><Gear className="h-[16px] w-[16px]" color="#8b8b8b" /></button>
    </footer>
  );
}

export default function App() {
  return (
    <div className="flex min-h-screen flex-col bg-white font-['Liberation_Sans',Arial,sans-serif]">
      <TitleBar />
      <div className="flex flex-1">
        <DataPanel />
        <main className="flex min-w-0 flex-1 flex-col">
          <DocumentBar />
          <Ribbon />
          <section aria-label="Lienzo" className="relative flex flex-1 flex-col justify-between">
            <Model />
            <ViewCube />
            <Browser />
            <div className="relative mb-[4px] flex items-center pl-[3px]">
              <div className="flex h-[23px] w-[282px] items-center border-x-2 border-b border-[#dadada] bg-[#f1f1f1] pl-[22px] font-['Roboto',sans-serif] text-[10px] text-[#555]">
                <h2 className="flex-1">COMENTARIOS</h2>
                <button aria-label="Añadir comentario" className="mr-[6px]">
                  <Glyph box="0 0 8 8" className="h-[8px] w-[8px]"><circle cx="4" cy="4" r="4" fill="#222" /><path d="M2 4H6M4 2V6" stroke="#fff" strokeWidth="1.300" /></Glyph>
                </button>
                <PanelHandle />
              </div>
              <div className="ml-[55px]"><ViewToolbar /></div>
            </div>
          </section>
          <Timeline />
        </main>
      </div>
    </div>
  );
}
